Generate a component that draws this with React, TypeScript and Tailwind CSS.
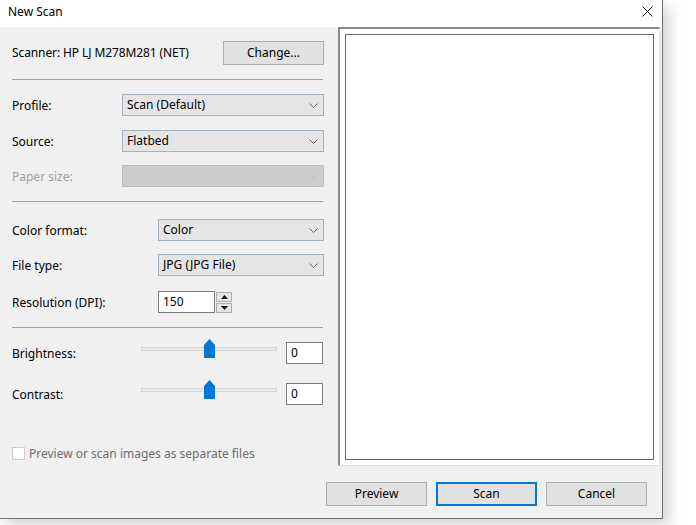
import React from 'react';

const Chevron: React.FC<{ disabled?: boolean }> = ({ disabled }) => (
    <svg width="9" height="5" viewBox="0 0 9 5" className="shrink-0">
        <path d="M0.5 0.5 L4.5 4.5 L8.5 0.5" fill="none" stroke={disabled ? '#bdbdbd' : '#606060'} strokeWidth="1" />
    </svg>
);

const Select: React.FC<{ value?: string; disabled?: boolean; className?: string }> = ({ value, disabled, className }) => (
    <div
        className={`h-[22px] flex items-center justify-between pl-[4px] pr-[5px] border ${
            disabled ? 'bg-[#cccccc] border-[#bfbfbf]' : 'bg-[#e5e5e5] border-[#a3b1bf]'
        } ${className ?? ''}`}
    >
        <span className="text-black">{value}</span>
        <Chevron disabled={disabled} />
    </div>
);

const Row: React.FC<{ label: string; labelClass?: string; className?: string; children: React.ReactNode }> = ({ label, labelClass, className, children }) => (
    <div className={`flex items-center ${className ?? ''}`}>
        <span className={`flex-1 pt-[1px] ${labelClass ?? 'text-black'}`}>{label}</span>
        {children}
    </div>
);

const Slider: React.FC = () => (
    <div className="w-[136px] h-[22px] relative flex items-center -mt-[8px]">
        <div className="w-full h-[4px] bg-[#e7eaea] border border-[#d6d6d6]" />
        {/* thumb */}
        <svg width="11" height="19" viewBox="0 0 11 19" className="absolute left-[63px] top-[1px]">
            <path d="M0 6 L5.5 0 L11 6 L11 19 L0 19 Z" fill="#0078d7" />
        </svg>
    </div>
);

const TextBox: React.FC<{ value: string; className?: string }> = ({ value, className }) => (
    <div className={`h-[22px] bg-white border border-[#7a7a7a] flex items-center pl-[4px] ${className ?? ''}`}>{value}</div>
);

const Separator: React.FC<{ className?: string }> = ({ className }) => (
    <div className={`h-px bg-[#a0a0a0] ${className ?? ''}`} />
);

const Button: React.FC<{ label: string; primary?: boolean }> = ({ label, primary }) => (
    <div
        className={`w-[101px] h-[24px] flex items-center justify-center bg-[#e1e1e1] ${
            primary ? 'border-2 border-[#0078d7]' : 'border border-[#adadad]'
        }`}
    >
        {label}
    </div>
);

export default function App() {
    return (
        <div
            className="min-h-screen bg-white text-[12px] leading-none text-black"
            style={{ fontFamily: '"Noto Sans", "Open Sans", sans-serif' }}
        >
            <div className="w-[663px] h-[519px] flex flex-col bg-[#f0f0f0] border-r border-b border-[#707070] shadow-[6px_6px_14px_rgba(0,0,0,0.18)]">
                {/* title bar */}
                <div className="h-[27px] bg-white flex items-center justify-between pl-[8px] pr-[9px] shrink-0">
                    <span className="-mt-[4px]">New Scan</span>
                    <svg width="11" height="11" viewBox="0 0 11 11" className="-mt-[4px]">
                        <path d="M0.5 0.5 L10.5 10.5 M10.5 0.5 L0.5 10.5" stroke="#111" strokeWidth="1" />
                    </svg>
                </div>

                <div className="flex">
                    {/* settings column */}
                    <div className="w-[338px] pl-[12px] pr-[14px] flex flex-col shrink-0">
                        <div className="mt-[14px] flex items-center justify-between">
                            <span className="tracking-[-0.1px]">Scanner: HP LJ M278M281 (NET)</span>
                            <Button label="Change..." />
                        </div>
                        <Separator className="mt-[14px] mr-px" />

                        <Row label="Profile:" className="mt-[14px]">
                            <Select value="Scan (Default)" className="w-[202px]" />
                        </Row>
                        <Row label="Source:" className="mt-[14px]">
                            <Select value="Flatbed" className="w-[202px]" />
                        </Row>
                        <Row label="Paper size:" labelClass="text-[#a0a0a0]" className="mt-[13px]">
                            <Select disabled className="w-[202px]" />
                        </Row>
                        <Separator className="mt-[14px] mr-px" />

                        <Row label="Color format:" className="mt-[17px]">
                            <Select value="Color" className="w-[166px]" />
                        </Row>
                        <Row label="File type:" className="mt-[13px]">
                            <Select value="JPG (JPG File)" className="w-[166px]" />
                        </Row>
                        <div className="mt-[15px] flex items-center">
                            <span className="w-[146px] pt-[1px]">Resolution (DPI):</span>
                            <TextBox value="150" className="w-[57px]" />
                            <div className="ml-px flex flex-col gap-px">
                                <div className="w-[16px] h-[10px] bg-[#e5e5e5] border border-[#adadad] flex items-center justify-center">
                                    <svg width="7" height="4" viewBox="0 0 7 4"><path d="M3.5 0 L7 4 L0 4 Z" fill="#111" /></svg>
                                </div>
                                <div className="w-[16px] h-[10px] bg-[#e5e5e5] border border-[#adadad] flex items-center justify-center">
                                    <svg width="7" height="4" viewBox="0 0 7 4"><path d="M0 0 L7 0 L3.5 4 Z" fill="#111" /></svg>
                                </div>
                            </div>
                        </div>
                        <Separator className="mt-[14px] mr-px" />

                        <div className="mt-[14px] flex items-center pr-px">
                            <span className="w-[129px] pt-[1px]">Brightness:</span>
                            <Slider />
                            <div className="flex-1" />
                            <TextBox value="0" className="w-[37px]" />
                        </div>
                        <div className="mt-[19px] flex items-center pr-px">
                            <span className="w-[129px] pt-[1px]">Contrast:</span>
                            <Slider />
                            <div className="flex-1" />
                            <TextBox value="0" className="w-[37px]" />
                        </div>

                        <div className="mt-[42px] flex items-center gap-[4px]">
                            <div className="w-[13px] h-[13px] bg-white border border-[#cccccc]" />
                            <span className="text-[#6d6d6d] pt-[1px]">Preview or scan images as separate files</span>
                        </div>
                    </div>

                    {/* preview frame */}
                    <div className="w-[322px] h-[439px] border-t-2 border-l-2 border-t-[#8a8a8a] border-l-[#8a8a8a] border-b border-r border-b-[#e3e3e3] border-r-[#e3e3e3] bg-white p-[5px]">
                        <div className="w-full h-full border border-[#646464]" />
                    </div>
                </div>

                {/* bottom buttons */}
                <div className="mt-[16px] pr-[15px] flex justify-end gap-[9px]">
                    <Button label="Preview" />
                    <Button label="Scan" primary />
                    <Button label="Cancel" />
                </div>
            </div>
        </div>
    );
}
